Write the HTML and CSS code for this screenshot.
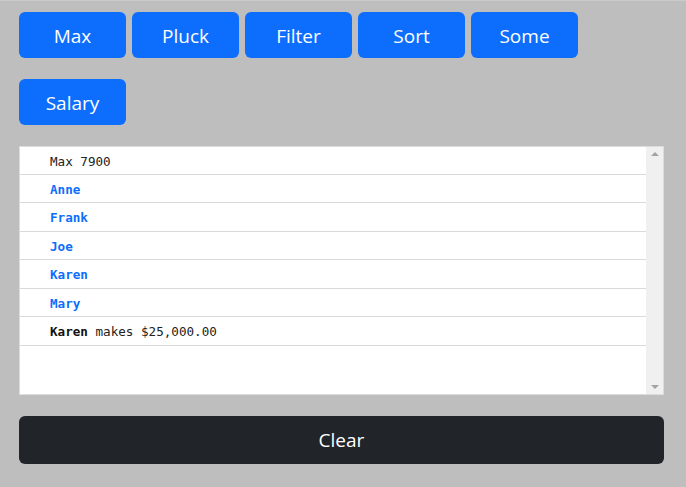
FILE: index.html
```html
<!DOCTYPE html>
<html>
<head>
<meta charset="utf-8">
<link rel="stylesheet" href="styles.css">
</head>
<body>
<div class="page">
  <div class="toolbar">
    <button class="btn">Max</button>
    <button class="btn">Pluck</button>
    <button class="btn">Filter</button>
    <button class="btn">Sort</button>
    <button class="btn">Some</button>
    <button class="btn">Salary</button>
  </div>
  <div class="output">
    <ul class="list">
      <li class="row">Max 7900</li>
      <li class="row name">Anne</li>
      <li class="row name">Frank</li>
      <li class="row name">Joe</li>
      <li class="row name">Karen</li>
      <li class="row name">Mary</li>
      <li class="row"><b>Karen</b> makes $25,000.00</li>
    </ul>
    <div class="scrollbar">
      <span class="arrow up"></span>
      <span class="arrow down"></span>
    </div>
  </div>
  <button class="clear">Clear</button>
</div>
</body>
</html>
```
FILE: styles.css
```css
html, body {
  margin: 0;
  padding: 0;
}
body {
  background: #bebebe;
  border-top: 1px solid #cacaca;
  height: 486px;
  overflow: hidden;
}
.page {
  padding: 11px 22px 0 19px;
  display: flex;
  flex-direction: column;
  gap: 21px;
}
.toolbar {
  display: flex;
  flex-wrap: wrap;
  column-gap: 6px;
  row-gap: 21px;
  width: 600px;
}
.btn {
  width: 107px;
  height: 46px;
  border: none;
  border-radius: 6px;
  background: #0d6efd;
  color: #fff;
  font-family: "Open Sans", "Noto Sans", sans-serif;
  font-size: 19px;
  padding: 2px 0 0;
}
.output {
  display: flex;
  height: 247px;
  background: #fff;
  border: 1px solid #dcdcdc;
}
.list {
  flex: 1;
  margin: 0;
  padding: 0;
  list-style: none;
}
.row {
  padding: 7px 0 5px 30px;
  line-height: 15.5px;
  border-bottom: 1px solid #d9d9d9;
  font-family: "DejaVu Sans Mono", monospace;
  font-size: 12.6px;
  color: #222;
}
.row:first-child {
  padding-top: 7px;
  padding-bottom: 4px;
}
.row b {
  font-weight: bold;
  color: #111;
}
.name {
  color: #0d6efd;
  font-weight: bold;
}
.scrollbar {
  width: 17px;
  background: #f0f0f0;
  display: flex;
  flex-direction: column;
  justify-content: space-between;
  align-items: center;
  padding: 5px 0;
}
.arrow {
  width: 0;
  height: 0;
  border-left: 4px solid transparent;
  border-right: 4px solid transparent;
}
.arrow.up {
  border-bottom: 4px solid #a3a3a3;
}
.arrow.down {
  border-top: 4px solid #a3a3a3;
}
.clear {
  height: 48px;
  border: none;
  border-radius: 6px;
  background: #212529;
  color: #fff;
  font-family: "Open Sans", "Noto Sans", sans-serif;
  font-size: 19px;
  padding: 0;
}
```
